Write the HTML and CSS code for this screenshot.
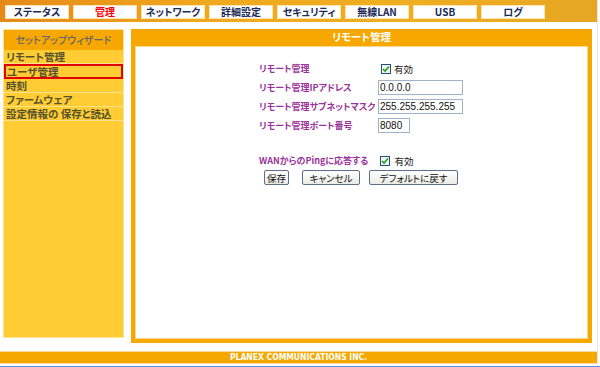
FILE: index.html
```html
<!DOCTYPE html>
<html lang="ja">
<head>
    <meta charset="UTF-8">
    <title>リモート管理</title>
    <link rel="stylesheet" href="styles.css">
</head>
<body>
    <div class="page">
        <div class="frame">
            <!-- 上部メニュー -->
            <div class="topnav">
                <a class="tab">ステータス</a>
                <a class="tab active">管理</a>
                <a class="tab">ネットワーク</a>
                <a class="tab">詳細設定</a>
                <a class="tab">セキュリティ</a>
                <a class="tab">無線LAN</a>
                <a class="tab">USB</a>
                <a class="tab">ログ</a>
            </div>

            <div class="main">
                <!-- サイドメニュー -->
                <div class="side">
                    <div class="side-head">セットアップウィザード</div>
                    <ul class="menu">
                        <li>リモート管理</li>
                        <li class="current">ユーザ管理</li>
                        <li>時刻</li>
                        <li>ファームウェア</li>
                        <li>設定情報の 保存と読込</li>
                    </ul>
                </div>

                <!-- 設定パネル -->
                <div class="panel">
                    <div class="panel-title">リモート管理</div>
                    <div class="panel-body">
                        <div class="form">
                            <div class="row">
                                <span class="label">リモート管理</span>
                                <span class="check"><span class="box"><svg width="8" height="8" viewBox="0 0 8 8"><path d="M1 4 L3 6 L7 1.5" fill="none" stroke="#21a121" stroke-width="1.6"/></svg></span>有効</span>
                            </div>
                            <div class="row">
                                <span class="label">リモート管理IPアドレス</span>
                                <input class="field" type="text" value="0.0.0.0">
                            </div>
                            <div class="row">
                                <span class="label">リモート管理サブネットマスク</span>
                                <input class="field" type="text" value="255.255.255.255">
                            </div>
                            <div class="row">
                                <span class="label">リモート管理ポート番号</span>
                                <input class="field short" type="text" value="8080">
                            </div>

                            <div class="ping">
                                <span class="label">WANからのPingに応答する</span>
                                <span class="check"><span class="box"><svg width="8" height="8" viewBox="0 0 8 8"><path d="M1 4 L3 6 L7 1.5" fill="none" stroke="#21a121" stroke-width="1.6"/></svg></span>有効</span>
                            </div>
                            <div class="buttons">
                                <button class="btn save">保存</button>
                                <button class="btn cancel">キャンセル</button>
                                <button class="btn reset">デフォルトに戻す</button>
                            </div>
                        </div>
                    </div>
                </div>
            </div>

            <div class="footer">PLANEX COMMUNICATIONS INC.</div>
        </div>
    </div>
</body>
</html>
```

FILE: styles.css
```css
* {
    margin: 0;
    padding: 0;
    box-sizing: border-box;
}

body {
    background: #fff;
    font-family: "Noto Sans CJK JP", "Liberation Sans", sans-serif;
    font-feature-settings: "palt";
}

.page {
    width: 600px;
    height: 367px;
    border-bottom: 1px solid #5b8ee6;
}

.frame {
    width: 598px;
    height: 366px;
    border-right: 1px solid #e6e6e6;
    display: flex;
    flex-direction: column;
}

/* 上部メニュー */
.topnav {
    height: 22px;
    padding: 5px 0 0 5px;
    display: flex;
    gap: 4px;
    background: linear-gradient(90deg, #e5891a, #f0a91e 35%, #efae21 70%, #e6a623);
}

.tab {
    width: 64px;
    height: 14px;
    background: #fff;
    border: 1px solid #fbe4ae;
    color: #1c2a57;
    font-size: 10px;
    font-weight: bold;
    line-height: 12px;
    text-align: center;
}

.tab.active {
    color: #f00;
}

.main {
    display: flex;
    gap: 7px;
    margin-top: 7px;
    padding-left: 3px;
}

/* サイドメニュー */
.side {
    width: 121px;
    height: 309px;
    background: #ffcc33;
    border: 1px solid #ffe293;
}

.side-head {
    height: 20px;
    background: #f7a800;
    color: #666;
    font-size: 10px;
    font-weight: 500;
    line-height: 20px;
    text-align: center;
}

.menu {
    list-style: none;
}

.menu li {
    height: 14px;
    padding-left: 2px;
    border-bottom: 1px solid #ffe28c;
    color: #56522e;
    font-size: 10.5px;
    font-weight: bold;
    line-height: 13px;
    white-space: pre;
    overflow: hidden;
}

.menu li.current {
    height: 15px;
    border: 2px solid #e00000;
    line-height: 11px;
    padding-left: 1px;
}

/* 設定パネル */
.panel {
    width: 461px;
    height: 314px;
    background: #f7a800;
    padding: 0 4px 4px 4px;
    display: flex;
    flex-direction: column;
}

.panel-title {
    height: 17px;
    color: #fff;
    font-size: 10.5px;
    font-weight: bold;
    line-height: 16px;
    text-align: center;
}

.panel-body {
    flex: 1;
    background: #fff;
    border: 1px solid #fcd98a;
}

.form {
    padding: 12px 0 0 123px;
}

.row {
    display: flex;
    align-items: center;
    height: 19px;
}

.label {
    color: #993399;
    font-size: 9px;
    font-weight: bold;
    line-height: 12px;
    white-space: nowrap;
}

.row .label {
    flex: none;
    width: 119px;
}

.check {
    display: flex;
    align-items: center;
    gap: 3px;
    font-size: 9.5px;
    line-height: 12px;
    color: #222;
    margin-left: 3px;
}

.box {
    width: 10px;
    height: 10px;
    border: 1px solid #1c5180;
    background: #f4f4f0;
    display: flex;
    align-items: center;
    justify-content: center;
}

.field {
    width: 85px;
    height: 15px;
    border: 1px solid #9fb2c8;
    padding: 0 1px;
    font-family: "Liberation Sans", sans-serif;
    font-size: 10px;
    color: #111;
    outline: none;
}

.field.short {
    width: 32px;
}

.ping {
    display: flex;
    align-items: center;
    gap: 12px;
    height: 19px;
    margin-top: 16px;
}

.ping .check {
    margin-left: 0;
    gap: 4px;
}

.buttons {
    display: flex;
    padding-left: 5px;
}

.btn {
    height: 15px;
    padding: 0;
    border: 1px solid #5d6f86;
    border-radius: 2px;
    background: linear-gradient(#ffffff, #ebebe6);
    font-family: "Noto Sans CJK JP", sans-serif;
    font-feature-settings: "palt";
    font-size: 9.5px;
    line-height: 12px;
    color: #111;
}

.btn.save {
    width: 25px;
}

.btn.cancel {
    width: 58px;
    margin-left: 13px;
}

.btn.reset {
    width: 89px;
    margin-left: 9px;
}

.footer {
    margin-top: 8px;
    height: 13px;
    background: #f5a800;
    border-top: 1px solid #fbdc9c;
    border-bottom: 1px solid #fbdc9c;
    color: #fff;
    font-family: "DejaVu Sans Condensed", "Liberation Sans", sans-serif;
    font-size: 8.5px;
    font-weight: bold;
    line-height: 11px;
    text-align: center;
}
```
